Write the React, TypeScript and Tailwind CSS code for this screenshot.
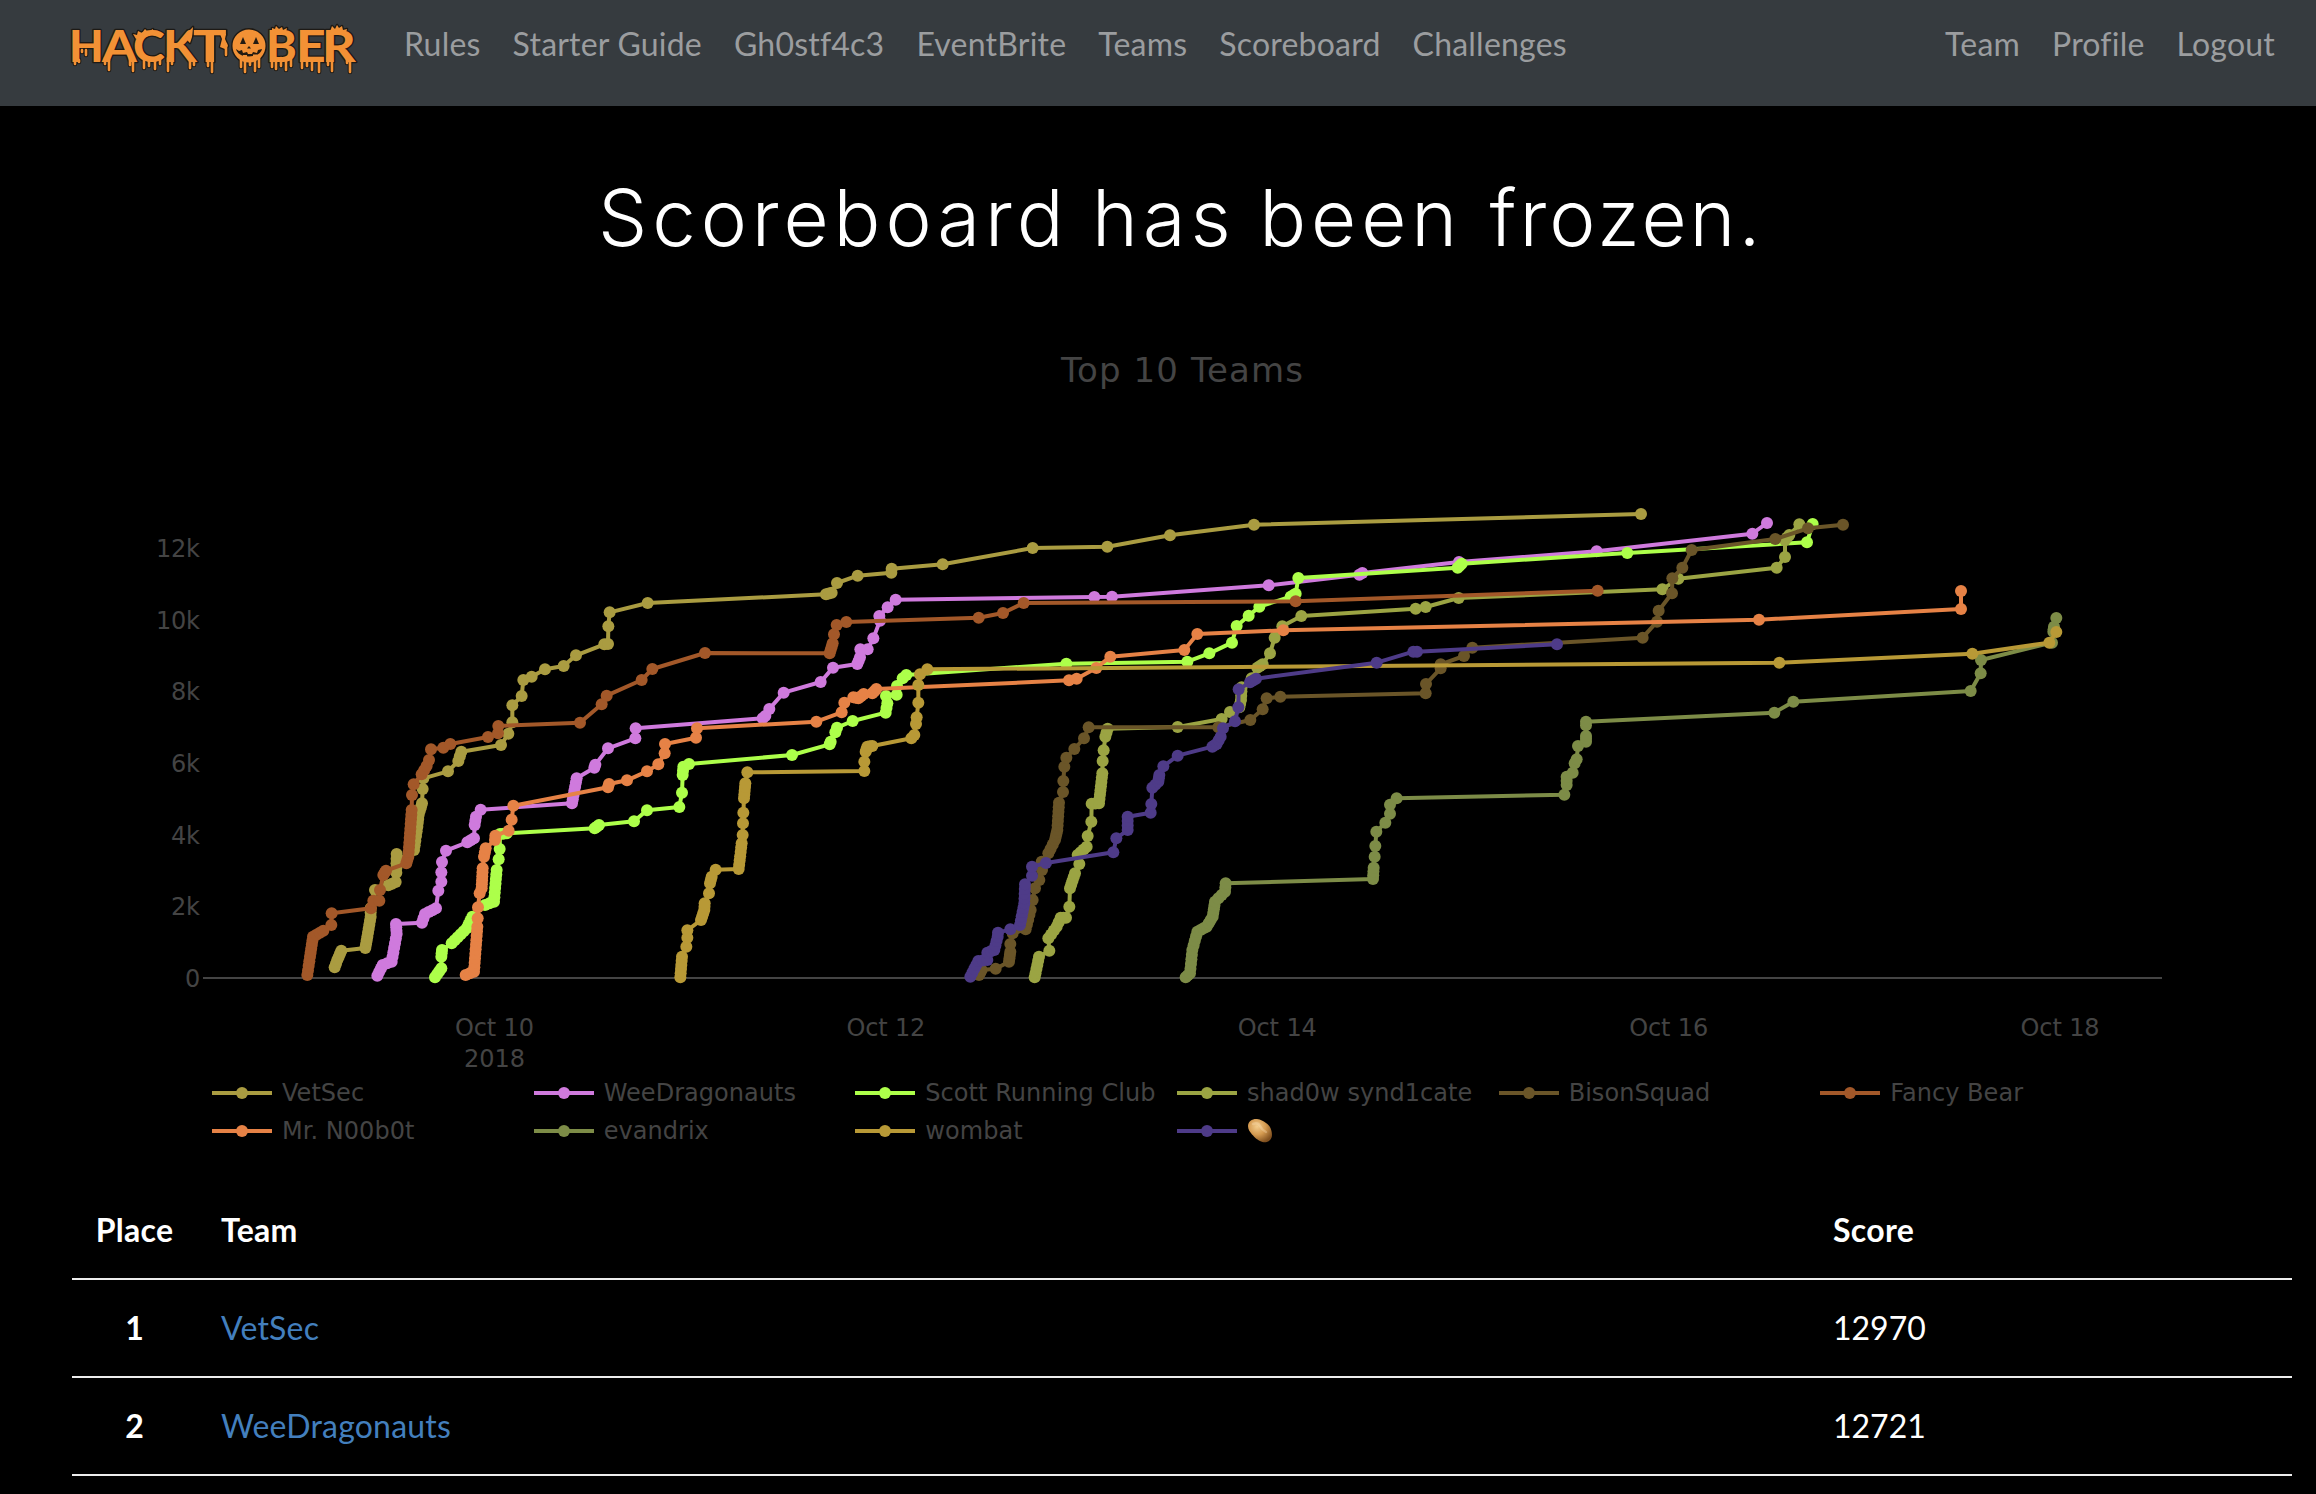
import React from "react";

type Point = [number, number];

interface Tile {
  origin: Point;
  // "x,y" tokens in thirds of a pixel; a leading "~" marks a dense run of solves.
  path: string;
}

interface Series {
  name: string;
  color: string;
  tiles: Tile[];
}

const t = (x: number, y: number, path: string): Tile => ({ origin: [x, y], path });

const SERIES: Series[] = [
  {
    name: "VetSec",
    color: "#aa9c41",
    tiles: [
      t(280, 660, "164,922 ~172,900 ~184,872 256,864 ~262,830 ~272,770 ~272,745 285,690 325,676 ~347,666 349,638 ~350,582 378,600 402,570 ~412,500 ~416,465 ~426,430 428,387 430,355 504,334 535,303 ~544,275 663,255 685,221 697,187 697,136 725,108 730,60 755,50 795,28 851,18"),
      t(280, 560, "888,286 973,253 ~984,252 985,199 989,157 1103,129"),
      t(580, 560, "738,103 ~755,98 771,69 833,47 934,38 ~935,26 1088,13 1358,-36 1582,-40"),
      t(1160, 500, "30,106 282,74"),
      t(1440, 490, "603,72"),
    ],
  },
  {
    name: "WeeDragonauts",
    color: "#cf7add",
    tiles: [
      t(280, 660, "292,947 ~308,915 ~335,905 ~350,822 ~348,792 426,788 ~435,762 ~468,745 475,692 484,665 484,637 486,606 498,572 562,547 ~582,535 584,495 ~588,470 602,449 876,430 ~890,355 943,323 ~946,314 984,265 1066,235 1067,205"),
      t(580, 560, "548,475 ~556,468 568,447 611,398 722,366 759,323 832,312 ~840,292 841,268 863,268 880,235 900,182 ~898,168 923,142 947,119 1543,111 1596,110"),
      t(1160, 500, "326,256 598,224 ~607,219 897,186"),
      t(1440, 490, "470,184 937,131 981,99"),
    ],
  },
  {
    name: "Scott Running Club",
    color: "#adff4a",
    tiles: [
      t(280, 660, "465,952 ~484,925 484,890 ~486,870 515,850 ~560,805 ~577,770 615,735 ~642,725 ~650,630 656,598 659,567 660,522 ~680,520 944,505 ~957,495 1062,484 1101,451"),
      t(580, 560, "298,741 306,698 308,645 ~310,620 327,612 636,585 749,553 ~752,545 766,517 ~771,503 818,483 917,458 ~922,430 918,408 950,404 951,378 968,355 ~979,345"),
      t(940, 640, "379,71"),
      t(1160, 500, "82,485 148,460 216,428 230,378 266,347 298,320 392,290 ~407,281 415,234 893,203 ~905,191"),
      t(1440, 490, "562,189 1101,157 1118,102"),
    ],
  },
  {
    name: "shad0w synd1cate",
    color: "#9ba443",
    tiles: [
      t(940, 640, "284,1012 ~292,975 ~297,950 328,932 325,895 ~350,860 ~362,833 ~378,833 388,800 390,745 ~405,700 418,672 413,645 ~440,620 443,588 454,545 455,491 ~477,490 ~487,400 488,363 491,331 496,290 ~503,266 713,261"),
      t(1160, 500, "185,657 210,636 238,622 ~243,600 ~245,562 275,535 292,503 ~308,493 330,460 344,413 367,379 424,348 767,326 797,321 896,294"),
      t(1440, 490, "667,298 715,266 1010,233 1035,201 1035,150 ~1048,135 1078,103"),
    ],
  },
  {
    name: "BisonSquad",
    color: "#6a5528",
    tiles: [
      t(940, 640, "117,1005 ~125,990 167,986 207,965 ~211,935 211,912 218,880 257,868 ~272,810 278,780 285,745 298,720 306,690 305,665 325,640 ~345,600 ~352,570 ~357,488 369,456 370,423 373,380 379,353 403,327 432,295 446,262 835,262"),
      t(1160, 500, "271,660 308,628 320,595 361,590 797,580 798,552 842,505 ~842,493 912,468 937,443"),
      t(1440, 490, "608,443 651,395 656,362 696,310 697,265 727,233 755,180 1006,147 1104,115 1209,104"),
    ],
  },
  {
    name: "Fancy Bear",
    color: "#a35829",
    tiles: [
      t(280, 660, "82,945 ~90,890 ~99,830 ~130,812 154,795 155,760 273,745 280,722 298,722 300,690 310,645 ~318,632 379,610 ~385,590 ~395,450 396,405 401,373 425,343 ~440,318 447,300 453,268 490,263 511,252 624,231 654,220 655,198 900,188 965,133 980,107 1085,60 1117,27"),
      t(580, 560, "375,279 749,280 ~758,250 762,223 770,195 799,186 1196,173 1269,159 1331,129"),
      t(1160, 500, "407,304"),
      t(1440, 490, "473,302"),
    ],
  },
  {
    name: "Mr. N00b0t",
    color: "#e68246",
    tiles: [
      t(280, 660, "557,945 ~582,935 ~592,800 593,775 594,742 599,700 605,685 ~608,625 612,590 ~617,565 645,540 646,527 686,512 695,479 700,437 984,382 ~987,372 1041,361 1101,334 1135,313 1154,280 1155,252"),
      t(580, 560, "348,533 351,505 709,485 785,457 793,428 820,412 ~835,415 ~851,402 877,400 ~889,387"),
      t(940, 640, "387,121 410,116 469,84 511,50 733,30"),
      t(1160, 500, "112,402 370,391"),
      t(1440, 490, "957,389"),
      t(1860, 500, "303,327 303,273"),
    ],
  },
  {
    name: "evandrix",
    color: "#7d8c47",
    tiles: [
      t(940, 640, "737,1012 ~750,1000 ~757,930 ~772,875 ~800,860 ~818,830 ~825,785 ~855,755 ~857,730"),
      t(1160, 500, "639,1137 ~641,1103 644,1070 646,1038 649,995 676,968 690,941 690,914 710,895"),
      t(1440, 490, "373,914 380,885 ~380,860 398,848 404,820 ~410,808 414,768 438,755 ~438,738 438,706 ~438,695 1003,668 1060,635"),
      t(1860, 500, "332,573 362,520 363,480 576,428 580,395 ~582,380 589,354"),
    ],
  },
  {
    name: "wombat",
    color: "#b89936",
    tiles: [
      t(580, 560, "301,1252 ~306,1190 319,1160 322,1133 322,1111 363,1080 ~373,1050 ~374,1030 387,1000 390,970 ~395,950 407,929 476,927 ~485,850 488,825 489,790 490,758 492,715 ~496,670 502,637 853,633 853,605 857,575 ~862,560 ~877,558 994,535 1003,525 1008,492 1010,472 1015,428 1015,375 1020,343 1042,328"),
      t(1440, 490, "1018,518"),
      t(1860, 500, "337,461 568,428 589,396"),
    ],
  },
  {
    name: "🥔",
    color: "#4e3b88",
    tiles: [
      t(940, 640, "91,1010 ~115,963 ~142,960 142,938 ~163,930 ~173,890 ~174,878 211,868 240,855 ~253,790 ~255,733 276,707 276,680 318,669 520,637 529,595 563,570 ~563,530 632,518 634,492 637,443 ~655,425 ~658,405 670,379 713,347 817,320 ~830,312 ~842,290 849,265 885,244"),
      t(1160, 500, "235,622 236,568 270,547 ~288,536 650,488 760,455 ~771,455"),
      t(1440, 490, "351,463"),
    ],
  },
];

function expand(tiles: Tile[]): Point[] {
  const out: Point[] = [];
  for (const { origin, path } of tiles) {
    for (const token of path.split(" ")) {
      const dense = token[0] === "~";
      const [a, b] = token.replace("~", "").split(",").map(Number);
      const p: Point = [origin[0] + a / 3, origin[1] + b / 3];
      const prev = out[out.length - 1];
      if (dense && prev) {
        const n = Math.ceil(Math.hypot(p[0] - prev[0], p[1] - prev[1]) / 5);
        for (let i = 1; i < n; i++) {
          out.push([prev[0] + ((p[0] - prev[0]) * i) / n, prev[1] + ((p[1] - prev[1]) * i) / n]);
        }
      }
      out.push(p);
    }
  }
  return out;
}

const Y_TICKS = ["12k", "10k", "8k", "6k", "4k", "2k", "0"];
const X_TICKS = ["Oct 10", "Oct 12", "Oct 14", "Oct 16", "Oct 18"];

function Chart() {
  return (
    <svg
      className="block h-[600px] w-[2316px] font-['DejaVu_Sans',sans-serif] text-[24px]"
      viewBox="0 480 2316 600"
      fill="#444444"
    >
      <rect x="203" y="977" width="1959" height="2" />
      {Y_TICKS.map((label, i) => {
        const w = [44, 44, 29, 29, 29, 29, 15][i];
        return (
          <text key={label} x={200 - w} y={557 + i * 71.65} textLength={w}>
            {label}
          </text>
        );
      })}
      {X_TICKS.map((label, i) => (
        <text key={label} x={455 + i * 391.4} y="1036" textLength="79">
          {label}
        </text>
      ))}
      <text x="464" y="1067" textLength="61">
        2018
      </text>
      {SERIES.map((s) => {
        const pts = expand(s.tiles);
        return (
          <g key={s.name} fill={s.color}>
            <polyline
              points={pts.map((p) => p.join(",")).join(" ")}
              fill="none"
              stroke={s.color}
              strokeWidth="4"
              strokeLinejoin="round"
            />
            {pts.map(([x, y], i) => (
              <circle key={i} cx={x} cy={y} r="6" />
            ))}
          </g>
        );
      })}
    </svg>
  );
}

function Potato() {
  return (
    <svg className="h-[26px] w-[26px]" viewBox="0 0 26 26">
      <defs>
        <radialGradient id="potato" cx="0.38" cy="0.32" r="0.72">
          <stop offset="0" stopColor="#f3cc8c" />
          <stop offset="0.5" stopColor="#d49a50" />
          <stop offset="1" stopColor="#80501f" />
        </radialGradient>
      </defs>
      <path
        d="M1 8C1 3 6 0.5 10 1C14 1.5 16 3 19 5C23 7.500 25 12 25 17C25 22 20 25.500 15.500 24C10 22 8 19.500 5 16.500C3 14 1 11.500 1 8Z"
        fill="url(#potato)"
      />
      <path d="M6 6Q11 4 13 8T19 14" fill="none" stroke="#ffe9c4" strokeOpacity="0.3" strokeWidth="2.5" strokeLinecap="round" />
    </svg>
  );
}

function Legend() {
  return (
    <ul className="ml-[212px] grid w-[1930px] grid-cols-6 auto-rows-[38px] font-['DejaVu_Sans',sans-serif] text-[24px] leading-[38px] tracking-[0.04px] text-[#444444]">
      {SERIES.map((s) => (
        <li key={s.name} className="flex items-center whitespace-nowrap">
          <svg className="mr-[10px] h-3 w-[60px] shrink-0" viewBox="0 0 60 12" fill={s.color}>
            <rect y="4" width="60" height="4" />
            <circle cx="30" cy="6" r="6" />
          </svg>
          {s.name === "🥔" ? <Potato /> : <span>{s.name}</span>}
        </li>
      ))}
    </ul>
  );
}

const LETTERS: [string, number, number][] = [
  ["H", 69, 35],
  ["A", 102, 35],
  ["C", 133, 32],
  ["K", 163, 34],
  ["T", 193, 34],
  ["B", 266, 31],
  ["E", 296, 30],
  ["R", 322, 34],
];

const DRIPS =
  "M75 60V64M79 60V62M86 50V55M82 50V52M105 58V64M109 60V70M130 58V65M133 58V71M144 60V68M149 60V66M155 60V69M160 58V64M168 58V71M172 58V64M190 60V68M194 60V65M208 58V66M212 60V72M241 60V67M245 60V72M250 60V65M255 60V71M259 58V67M272 58V67M276 58V69M281 58V66M286 58V70M291 58V66M302 60V68M307 60V66M312 60V70M319 60V72M332 60V71M328 58V65M347 58V63M350 60V72M226 44V55";

const SPLASHES =
  "M136 39L133 34L137 35L138 31L142 33L145 29L148 32L153 29L153 33L146 37ZM272 33L272 28L275 29L276 26L279 29L282 27L283 30L287 28L286 33ZM329 33L331 29L332 26L335 29L337 25L339 28L342 26L343 30L347 29L346 33ZM184 38L188 32L193 27L192 37L190 43L187 40ZM220 34L226 34L225 39L228 46L225 49L220 47L222 39Z";

function Logo() {
  return (
    <svg className="block h-[90px] w-[310px]" viewBox="60 4 310 90">
      <path d={SPLASHES} fill="#1d1a16" stroke="#1d1a16" strokeWidth="2.6" strokeLinejoin="round" />
      <path d={DRIPS} fill="none" stroke="#1d1a16" strokeWidth="4.6" strokeLinecap="round" />
      <g
        className="font-['Lato',sans-serif] text-[44px] font-black"
        fill="#f29135"
        stroke="#1d1a16"
        strokeWidth="2.6"
        strokeLinejoin="round"
        style={{ paintOrder: "stroke" }}
      >
        {LETTERS.map(([c, x, w]) => (
          <text key={c} x={x} y="62" textLength={w} lengthAdjust="spacingAndGlyphs">
            {c}
          </text>
        ))}
      </g>
      <circle cx="249" cy="46" r="17.2" fill="#f29135" stroke="#1d1a16" strokeWidth="1.4" />
      <path d={SPLASHES} fill="#f29135" />
      <path d={DRIPS} fill="none" stroke="#f29135" strokeWidth="2.6" strokeLinecap="round" />
      <g fill="#231b12">
        <path d="M243 37L246 44L240 44Z" />
        <path d="M256 37L259 44L253 44Z" />
        <path d="M249 46L251 48.500H247Z" />
        <path d="M236 49L239 51L242 50L243 53L247 52L248 54L252 54L253 52L257 53L258 50L262 49C261 53 257 56.500 249 56.500C241 56.500 237 53 236 49Z" />
      </g>
      <path d="M243 57V55H247V57ZM253 57V54.500H257V57Z" fill="#f29135" />
    </svg>
  );
}

const NAV_LEFT = ["Rules", "Starter Guide", "Gh0stf4c3", "EventBrite", "Teams", "Scoreboard", "Challenges"];
const NAV_RIGHT = ["Team", "Profile", "Logout"];

const ROWS = [
  { place: 1, team: "VetSec", score: 12970 },
  { place: 2, team: "WeeDragonauts", score: 12721 },
];

export default function App() {
  return (
    <div className="h-[1494px] w-[2316px] overflow-hidden bg-black font-['Lato',sans-serif] text-[32px] leading-[48px] text-white">
      <nav className="flex h-[106px] items-start bg-[#363b3f] pr-[41px] pl-[60px] tracking-[0.21px] text-[#9b9d9f]">
        <div className="pt-1">
          <Logo />
        </div>
        <div className="ml-[34px] flex gap-8 pt-5">
          {NAV_LEFT.map((item) => (
            <a key={item}>{item}</a>
          ))}
        </div>
        <div className="ml-auto flex gap-8 pt-5">
          {NAV_RIGHT.map((item) => (
            <a key={item}>{item}</a>
          ))}
        </div>
      </nav>

      <h1 className="mt-[62px] ml-[598px] h-[100px] font-['Inter',sans-serif] text-[78px] leading-[100px] font-light tracking-[4.9px] whitespace-nowrap [word-spacing:-3.4px]">
        Scoreboard has been <span className="ml-1 tracking-[3px]">frozen.</span>
      </h1>

      <h2 className="mt-[80px] ml-[49px] h-[44px] text-center font-['DejaVu_Sans',sans-serif] text-[34px] leading-[44px] tracking-[1.1px] text-[#444444]">
        Top 10 Teams
      </h2>

      <div className="mt-[88px] h-[594px]">
        <Chart />
      </div>
      <Legend />

      <table className="mt-[31px] ml-[72px] w-[2220px] table-fixed border-collapse text-left tracking-[0.1px]">
        <thead>
          <tr className="h-[98px] border-b-2 border-[#ededed] font-bold">
            <th className="w-[125px] text-center tracking-[0.3px]">Place</th>
            <th className="w-[1612px] pl-6 tracking-[0.3px]">Team</th>
            <th className="pl-6 tracking-[0.3px]">Score</th>
          </tr>
        </thead>
        <tbody>
          {ROWS.map((r) => (
            <tr key={r.place} className="h-[98px] border-b-2 border-[#ededed]">
              <th className="text-center font-bold">{r.place}</th>
              <td className="pl-6 tracking-[0.2px] text-[#437fbd]">{r.team}</td>
              <td className="pl-6 tracking-normal">{r.score}</td>
            </tr>
          ))}
        </tbody>
      </table>
    </div>
  );
}
